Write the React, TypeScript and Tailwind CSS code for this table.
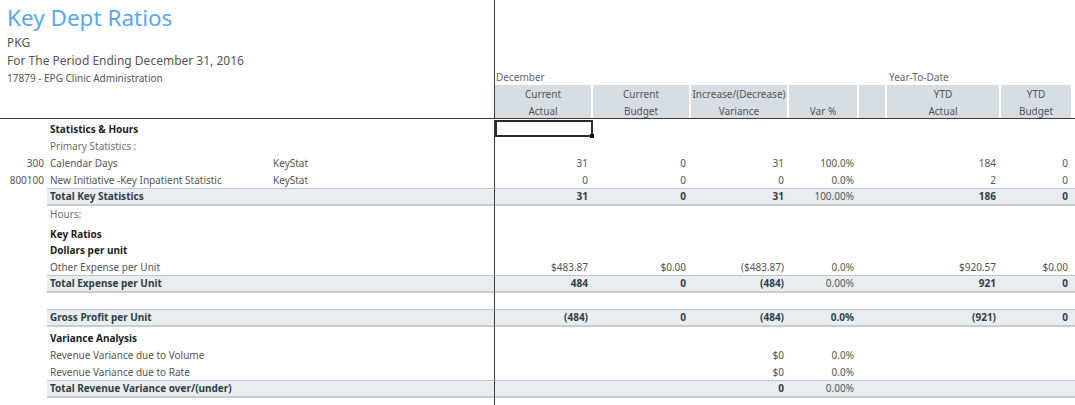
import React from "react";

const COLS =
  "grid grid-cols-[47px_224px_224px_98px_98px_98px_70px_28px_114px_72px_1fr]";

type Row = {
  code?: string;
  label?: string;
  stat?: string;
  v?: string[]; // 7 values in right pane
  kind: "head" | "sub" | "plain" | "band" | "blank";
  h: number;
  boldPct?: boolean;
};

const rows: Row[] = [
  { label: "Statistics & Hours", kind: "head", h: 17 },
  { label: "Primary Statistics :", kind: "sub", h: 17 },
  { code: "300", label: "Calendar Days", stat: "KeyStat", v: ["31", "0", "31", "100.0%", "", "184", "0"], kind: "plain", h: 17 },
  { code: "800100", label: "New Initiative -Key Inpatient Statistic", stat: "KeyStat", v: ["0", "0", "0", "0.0%", "", "2", "0"], kind: "plain", h: 17 },
  { label: "Total Key Statistics", v: ["31", "0", "31", "100.00%", "", "186", "0"], kind: "band", h: 17 },
  { label: "Hours:", kind: "sub", h: 17 },
  { label: "Key Ratios", kind: "head", h: 20 },
  { label: "Dollars per unit", kind: "head", h: 16 },
  { label: "Other Expense per Unit", v: ["$483.87", "$0.00", "($483.87)", "0.0%", "", "$920.57", "$0.00"], kind: "plain", h: 17 },
  { label: "Total Expense per Unit", v: ["484", "0", "(484)", "0.00%", "", "921", "0"], kind: "band", h: 17 },
  { kind: "blank", h: 17 },
  { label: "Gross Profit per Unit", v: ["(484)", "0", "(484)", "0.0%", "", "(921)", "0"], kind: "band", h: 17, boldPct: true },
  { label: "Variance Analysis", kind: "head", h: 20 },
  { label: "Revenue Variance due to Volume", v: ["", "", "$0", "0.0%", "", "", ""], kind: "plain", h: 17 },
  { label: "Revenue Variance due to Rate", v: ["", "", "$0", "0.0%", "", "", ""], kind: "plain", h: 17 },
  { label: "Total Revenue Variance over/(under)", v: ["", "", "0", "0.00%", "", "", ""], kind: "band", h: 17 },
  { kind: "blank", h: 20 },
];

function BodyRow({ r, first }: { r: Row; first: boolean }) {
  const band = r.kind === "band";
  const cellBase = "flex items-end pb-[1px] leading-[14px] whitespace-nowrap overflow-visible";
  const bandCls = band ? "bg-[#e9edf0] border-t border-t-[#b9c6cf] border-b-2 border-b-[#c3cdd4]" : "";
  const labelColor =
    r.kind === "head"
      ? "font-bold text-[#1e1e1e]"
      : r.kind === "band"
      ? "font-bold text-[#2f3e49]"
      : r.kind === "sub"
      ? "text-[#707070]"
      : "text-[#555]";
  return (
    <div className={COLS} style={{ height: r.h }}>
      <div className={`${cellBase} justify-end pr-[3px] text-[#555]`}>{r.code}</div>
      <div className={`${cellBase} pl-[3px] ${labelColor} ${bandCls}`}>{r.label}</div>
      <div className={`${cellBase} pl-[2px] text-[#555] ${bandCls} border-r border-r-[#3a3a3a]`}>{r.stat}</div>
      {Array.from({ length: 8 }).map((_, i) => {
        const val = r.v ? r.v[i] ?? "" : "";
        const isPct = i === 3;
        const bold = band && (!isPct || r.boldPct);
        const color = bold ? "font-bold text-[#2f3e49]" : "text-[#555]";
        return (
          <div key={i} className={`${cellBase} justify-end pr-[5px] ${color} ${bandCls} relative`}>
            {first && i === 0 && (
              <div className="absolute inset-0 border-2 border-[#2a2a2a]">
                <div className="absolute -right-[3px] -bottom-[3px] w-[4px] h-[4px] bg-[#111]" />
              </div>
            )}
            {val}
          </div>
        );
      })}
    </div>
  );
}

function HeadCell({ top, bottom, w, last }: { top: string; bottom: string; w: number; last?: boolean }) {
  return (
    <div
      className={`bg-[#d6dde3] flex flex-col items-center text-[#555] leading-[17px] pt-[1px] ${last ? "" : "mr-[2px]"}`}
      style={{ width: w }}
    >
      <div className="h-[17px]">{top}</div>
      <div className="h-[15px]">{bottom}</div>
    </div>
  );
}

export default function App() {
  return (
    <div
      className="w-[1075px] h-[405px] overflow-hidden bg-white text-[10px]"
      style={{ fontFamily: "'Noto Sans', 'Open Sans', sans-serif" }}
    >
      {/* header band above frozen line */}
      <div className="flex h-[119px] border-b border-b-[#3a3a3a]">
        <div className="w-[495px] shrink-0 border-r border-r-[#3a3a3a] pl-[7px] pt-[3px] text-[#555]">
          <div className="text-[22.5px] leading-[30px] text-[#5aa9e6]">Key Dept Ratios</div>
          <div className="text-[12px] leading-[18px] mt-[1px]">PKG</div>
          <div className="text-[12px] leading-[18px]">For The Period Ending December 31, 2016</div>
          <div className="text-[10px] leading-[17px]">17879 - EPG Clinic Administration</div>
        </div>
        <div className="flex-1 flex flex-col justify-end">
          <div className="flex h-[14px] leading-[14px] text-[#666] mb-[1px]">
            <div className="w-[392px] pl-[1px]">December</div>
            <div className="pl-[2px]">Year-To-Date</div>
          </div>
          <div className="flex h-[33px]">
            <HeadCell top="Current" bottom="Actual" w={96} />
            <HeadCell top="Current" bottom="Budget" w={96} />
            <HeadCell top="Increase/(Decrease)" bottom="Variance" w={96} />
            <HeadCell top="" bottom="Var %" w={68} />
            <HeadCell top="" bottom="" w={26} />
            <HeadCell top="YTD" bottom="Actual" w={112} />
            <HeadCell top="YTD" bottom="Budget" w={70} />
            <div className="flex-1 bg-white" />
          </div>
        </div>
      </div>
      <div className="pt-[1px]">
        {rows.map((r, i) => (
          <BodyRow key={i} r={r} first={i === 0} />
        ))}
      </div>
    </div>
  );
}
